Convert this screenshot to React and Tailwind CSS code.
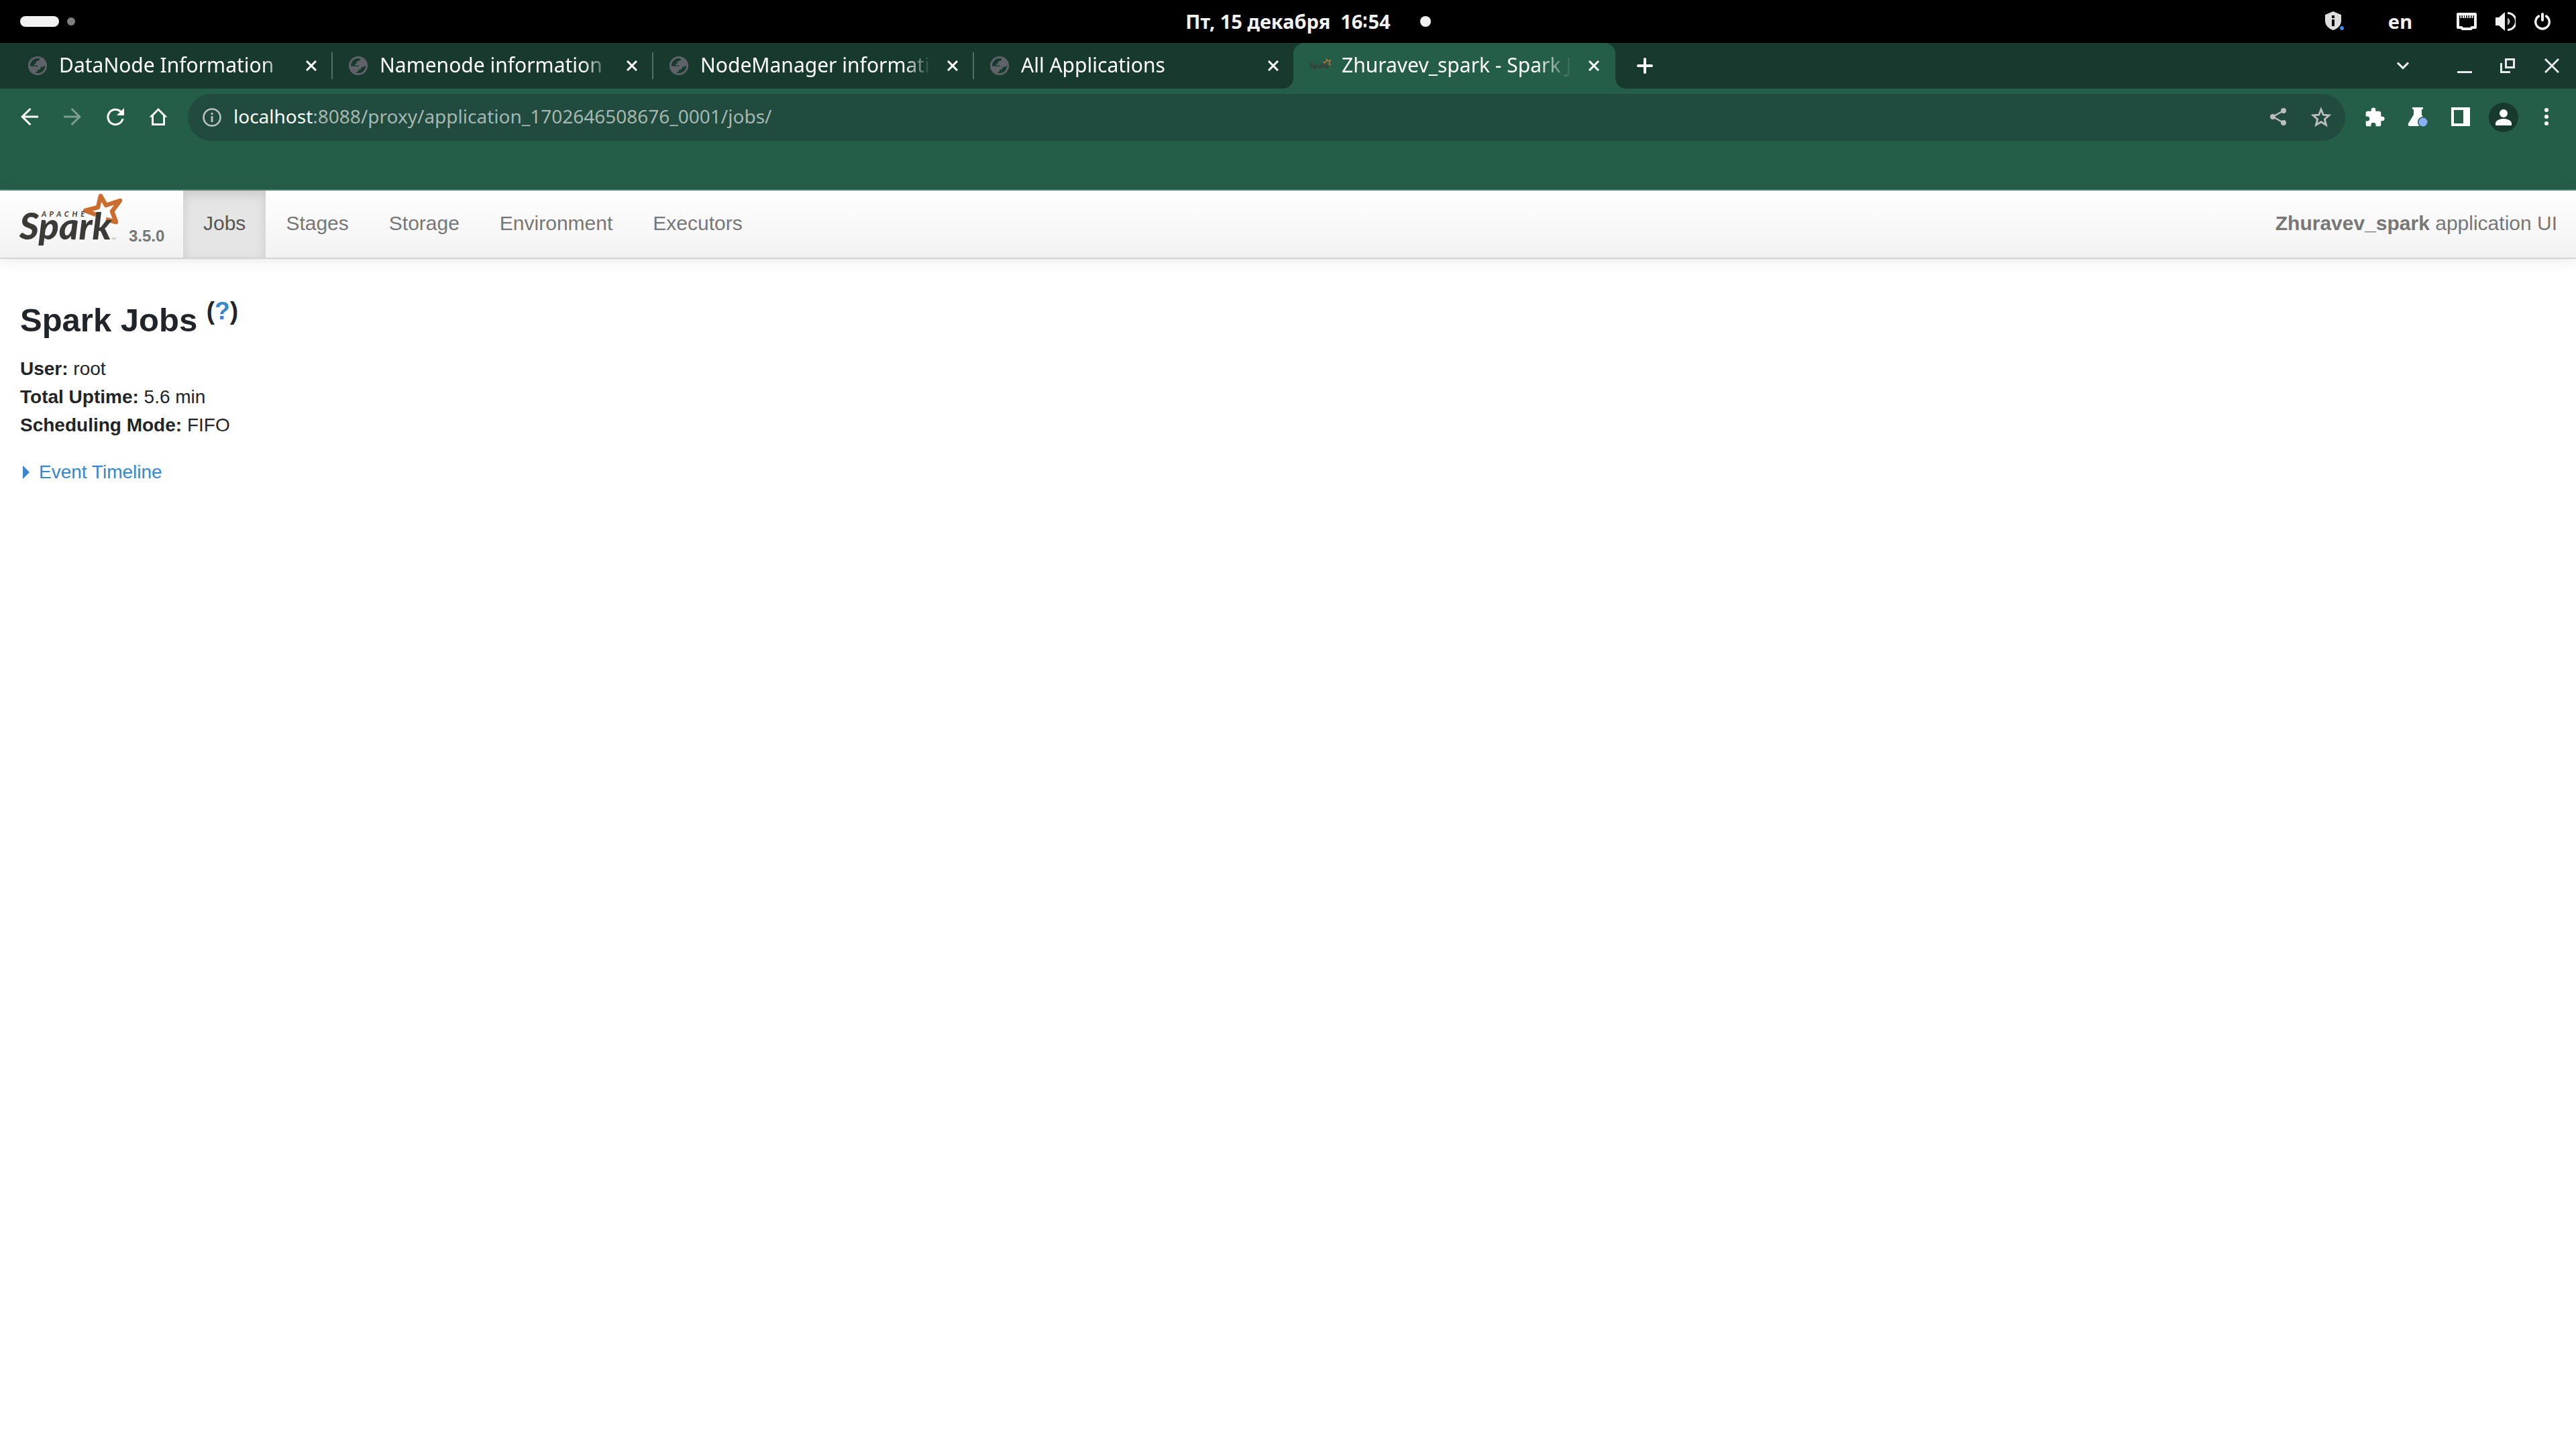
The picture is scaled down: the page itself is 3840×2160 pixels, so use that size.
import React from "react";

const TABS = [
  { title: "DataNode Information" },
  { title: "Namenode information" },
  { title: "NodeManager information" },
  { title: "All Applications" },
];

const NAV = ["Stages", "Storage", "Environment", "Executors"];

function Globe() {
  return (
    <svg viewBox="0 0 28 28" className="h-7 w-7 shrink-0" aria-hidden="true">
      <circle cx="14" cy="14" r="14" fill="#5f6368" />
      <path d="M3 14.500A11 11 0 0 1 17.500 3.500C17 6.500 14.500 7 12 7.500c0 2.500-.5 3.500-3 4v2h4c1.500 0 2 .8 2 1.500z" fill="#17392e" />
      <path d="M25 13c-1 2.500-3.500 3-6 2.500 0 3-1.500 4.500-5 4.500v2.300l-3.500 2.200A11 11 0 0 0 25 13z" fill="#17392e" />
    </svg>
  );
}

function SparkLogo({ className, viewBox = "0 0 160 88" }) {
  return (
    <svg viewBox={viewBox} className={className} role="img" aria-label="Apache Spark">
      <path
        d="M119 36L103 30L122 25L126 8L134 22L155 15L143 31L149 47L134 43"
        fill="none" stroke="#cb6d2f" strokeWidth="6.500" strokeLinejoin="round"
      />
      <text x="38" y="39" fontSize="11" fill="#3c3a37" fontWeight="700" fontStyle="italic" fontFamily="Lato, sans-serif">{"A\u00a0\u00a0P\u00a0\u00a0A\u00a0\u00a0C\u00a0\u00a0H\u00a0\u00a0E"}</text>
      <text x="5" y="73" fontSize="56" fill="#3c3a37" fontWeight="900" fontStyle="italic" fontFamily="Lato, sans-serif">Spark</text>
      <text x="142" y="77" fontSize="9" fill="#9a9a9a" fontFamily="Lato, sans-serif">™</text>
    </svg>
  );
}

function CloseButton({ label }) {
  return (
    <button aria-label={label} className="flex h-8 w-8 shrink-0 items-center justify-center">
      <svg viewBox="0 0 16 16" className="h-4 w-4" stroke="#fff" strokeWidth="3"><path d="M1 1l14 14M15 1L1 15" /></svg>
    </button>
  );
}

function Tool({ label, className = "", children }) {
  return (
    <button aria-label={label} className={"flex h-16 w-16 shrink-0 items-center justify-center " + className}>
      <svg viewBox="0 0 32 32" className="h-8 w-8" fill="currentColor">{children}</svg>
    </button>
  );
}

function SystemBar() {
  return (
    <header className="grid h-16 grid-cols-3 items-center bg-black text-[29px] leading-8 font-bold text-[#f2f2f2]">
      <div className="flex items-center gap-3 pl-[30px]">
        <span className="h-4 w-[58px] rounded-full bg-[#f2f2f2]" />
        <span className="h-3 w-3 rounded-full bg-[#7f7f7f]" />
      </div>
      <div className="relative justify-self-center whitespace-pre">
        Пт, 15 декабря  16∶54
        <span className="absolute top-2 left-full ml-11 h-4 w-4 rounded-full bg-[#f2f2f2]" />
      </div>
      <div className="flex items-center justify-end pr-[38px]">
        <svg viewBox="0 0 30 30" className="h-[30px] w-[30px]" aria-label="VPN shield">
          <path d="M12 0l12 5v9c0 6.500-5 11.500-12 14C5 25.500 0 20.500 0 14V5z" fill="#dedede" />
          <path d="M10 6h4v4h-4zM10 12h4v10h-4z" fill="#000" />
          <circle cx="25" cy="25" r="3" fill="#3b82f6" />
        </svg>
        <span className="ml-[64px]">en</span>
        <svg viewBox="0 0 30 28" className="ml-[66px] h-7 w-[30px]" aria-label="Network">
          <path fillRule="evenodd" fill="#f2f2f2" d="M2 1h26a2 2 0 0 1 2 2v20a2 2 0 0 1-2 2h-4l-2 2H8l-2-2H2a2 2 0 0 1-2-2V3a2 2 0 0 1 2-2zm2 4v16h4l2 2h10l2-2h4V5h-1.500v4h-2V5h-1.500v4h-2V5h-1.500v4h-2V5h-1.500v4h-2V5H11v4H9V5H7.500v4h-2V5z" />
        </svg>
        <svg viewBox="0 0 30 28" className="ml-7 h-7 w-[30px]" aria-label="Volume">
          <path d="M0 8h5l9-8v28l-9-8H0z" fill="#f2f2f2" />
          <path d="M18 8.500c2 1 3.500 3 3.500 5.500s-1.500 4.500-3.500 5.500z" fill="#bdbdbd" />
          <path d="M18 1.500a12.500 12.500 0 0 1 0 25" fill="none" stroke="#f2f2f2" strokeWidth="3" />
        </svg>
        <svg viewBox="0 0 24 28" className="ml-7 h-7 w-6" aria-label="Power" fill="none" stroke="#f2f2f2" strokeLinecap="round">
          <path d="M6.500 6a10.300 10.300 0 1 0 11 0" strokeWidth="3.400" />
          <path d="M12 3v9" strokeWidth="4" />
        </svg>
      </div>
    </header>
  );
}

function TabStrip() {
  return (
    <div className="flex h-[68px] items-stretch bg-[#17392e] pl-4 text-[30px] leading-9 text-white">
      {TABS.map((t, i) => (
        <div key={t.title} className="flex w-[478px] items-center">
          <span className={i ? "h-10 w-[2px] bg-[#4f7265]" : "h-10 w-[2px]"} />
          <div className="ml-6 flex min-w-0 flex-1 items-center pr-[14px]">
            <Globe />
            <span className="mr-4 ml-[18px] min-w-0 flex-1 overflow-hidden pb-[2px] whitespace-nowrap [mask-image:linear-gradient(to_right,#000_88%,transparent)]">{t.title}</span>
            <CloseButton label={"Close " + t.title} />
          </div>
        </div>
      ))}
      <div className="relative flex w-[480px] items-center rounded-t-2xl bg-[#255e48] pr-4 pl-6">
        <span className="absolute bottom-0 -left-4 h-4 w-4 bg-[radial-gradient(circle_at_top_left,transparent_16px,#255e48_16px)]" />
        <span className="absolute -right-4 bottom-0 h-4 w-4 bg-[radial-gradient(circle_at_top_right,transparent_16px,#255e48_16px)]" />
        <SparkLogo className="h-8 w-8 shrink-0" viewBox="5 10 150 88" />
        <span className="mr-4 ml-4 min-w-0 flex-1 overflow-hidden pb-[2px] whitespace-nowrap [mask-image:linear-gradient(to_right,#000_84%,transparent)]">Zhuravev_spark - Spark Jobs</span>
        <CloseButton label="Close Zhuravev_spark" />
      </div>
      <button aria-label="New tab" className="ml-7 flex w-8 items-center justify-center">
        <svg viewBox="0 0 24 24" className="h-6 w-6" stroke="#fff" strokeWidth="4" strokeLinecap="round"><path d="M12 2v20M2 12h20" /></svg>
      </button>
      <div className="ml-auto flex items-center pr-1 text-[#e8eaed]">
        <button aria-label="Search tabs" className="mr-7 flex h-16 w-16 items-center justify-center">
          <svg viewBox="0 0 18 12" className="h-3 w-[18px]" fill="none" stroke="#fff" strokeWidth="3"><path d="M1 1.500l8 8 8-8" /></svg>
        </button>
        <button aria-label="Minimize" className="flex h-16 w-16 items-center justify-center">
          <svg viewBox="0 0 22 22" className="h-[22px] w-[22px]" fill="currentColor"><path d="M0 19h22v3H0z" /></svg>
        </button>
        <button aria-label="Restore" className="mr-[2px] flex h-16 w-16 items-center justify-center">
          <svg viewBox="0 0 22 22" className="h-[22px] w-[22px]" fill="none" stroke="currentColor" strokeWidth="3"><path d="M8.500 1.500h12v12h-12zM1.500 7v13.500H15" /></svg>
        </button>
        <button aria-label="Close window" className="flex h-16 w-16 items-center justify-center">
          <svg viewBox="0 0 22 22" className="h-[22px] w-[22px]" fill="none" stroke="currentColor" strokeWidth="3"><path d="M1 1l20 20M21 1L1 21" /></svg>
        </button>
      </div>
    </div>
  );
}

function Toolbar() {
  return (
    <div className="h-[152px] border-b-2 border-[#4d826d] bg-[#255e48] pt-2 text-white">
      <div className="flex h-[70px] items-center px-3">
        <Tool label="Back"><path d="M29 13.500H8.800L18.500 4 16.300 2 3 15l13.300 13 2.200-2L8.800 16.500H29z" /></Tool>
        <Tool label="Forward" className="opacity-40"><path d="M3 13.500h20.200L13.500 4l2.200-2L29 15l-13.300 13-2.200-2 9.700-9.500H3z" /></Tool>
        <Tool label="Reload">
          <path d="M27 18a11.200 11.200 0 1 1-3-10.500" fill="none" stroke="currentColor" strokeWidth="3" />
          <path d="M29 2v11H18z" />
        </Tool>
        <Tool label="Home"><path fillRule="evenodd" d="M16 2L2.500 15.500H6V28h20V15.500h3.500zM16 6l7 7.200V25H9V13.200z" /></Tool>
        <div className="ml-3 flex h-full min-w-0 flex-1 items-center rounded-full bg-[#204b3e] pr-1 pl-[22px] text-[28px]">
          <svg viewBox="0 0 28 28" className="h-7 w-7 shrink-0" aria-label="Site information">
            <circle cx="14" cy="14" r="12.500" fill="none" stroke="#bdc1c6" strokeWidth="2.600" />
            <path d="M12.600 7h2.800v3h-2.800zM12.600 12h2.800v9h-2.800z" fill="#bdc1c6" />
          </svg>
          <a href="#url" className="ml-[18px] flex-1 pb-1 whitespace-nowrap text-[#a6b7b1]"><span className="text-white">localhost</span>:8088/proxy/application_1702646508676_0001/jobs/</a>
          <Tool label="Share" className="text-[#bdbdbd]">
            <circle cx="8" cy="15" r="4" /><circle cx="24" cy="6" r="4" /><circle cx="24" cy="24" r="4" />
            <path d="M24 6L8 15l16 9" fill="none" stroke="currentColor" strokeWidth="2.400" />
          </Tool>
          <Tool label="Bookmark" className="text-[#bdbdbd]">
            <path d="M16 4l3.300 8.200 8.700.7-6.700 5.800 2.200 8.600L16 22.700l-7.500 4.600 2.200-8.600L4 12.900l8.700-.7z" fill="none" stroke="currentColor" strokeWidth="2.800" />
          </Tool>
        </div>
        <Tool label="Extensions" className="ml-3">
          <path d="M27.300 14.700h-2V9.300a2.700 2.700 0 0 0-2.600-2.600h-5.400v-2a3.300 3.300 0 0 0-6.600 0v2H5.300a2.600 2.600 0 0 0-2.600 2.600v5.100h2a3.600 3.600 0 0 1 0 7.200h-2v5.100a2.600 2.600 0 0 0 2.600 2.600h5.100v-2a3.600 3.600 0 0 1 7.200 0v2h5.100a2.600 2.600 0 0 0 2.600-2.600v-5.400h2a3.300 3.300 0 0 0 0-6.600z" />
        </Tool>
        <Tool label="Labs">
          <path d="M8 1h16v3h-2v8l7 13c1 2 0 4-2 4H4c-2 0-3-2-2-4l8-13V4H8z" />
          <circle cx="24" cy="23" r="8" fill="#255e48" /><circle cx="24" cy="23" r="6.500" fill="#8ab0f8" />
        </Tool>
        <Tool label="Side panel"><path fillRule="evenodd" d="M2 1h28v28H2zM6 5v20h14V5z" /></Tool>
        <button aria-label="Profile" className="flex h-16 w-16 shrink-0 items-center justify-center">
          <svg viewBox="0 0 44 44" className="h-11 w-11"><circle cx="22" cy="22" r="22" fill="#17392e" /><circle cx="22" cy="16" r="6" fill="#fff" /><path d="M10 34v-3c0-4.500 7-7 12-7s12 2.500 12 7v3z" fill="#fff" /></svg>
        </button>
        <Tool label="Menu"><circle cx="16" cy="5" r="3" /><circle cx="16" cy="15" r="3" /><circle cx="16" cy="25" r="3" /></Tool>
      </div>
    </div>
  );
}

function Navbar() {
  return (
    <nav className="flex h-[102px] items-stretch border-b-2 border-[#d4d4d4] bg-gradient-to-b from-white to-[#f2f2f2] text-[30px] leading-10 text-[#777] shadow-[0_2px_20px_rgba(0,0,0,0.1)]">
      <a href="#home" className="flex w-[273px] items-start pl-6">
        <SparkLogo className="h-[88px] w-[160px]" />
        <span className="mt-12 ml-2 text-2xl leading-10 font-bold">3.5.0</span>
      </a>
      <a href="#jobs" className="flex items-center bg-[#e5e5e5] px-[30px] pb-[2px] text-[#555] shadow-[inset_0_6px_16px_rgba(0,0,0,0.125)]">Jobs</a>
      {NAV.map((n) => (
        <a key={n} href={"#" + n} className="flex items-center px-[30px] pb-[2px]">{n}</a>
      ))}
      <p className="ml-auto self-center pr-7 pb-[2px]"><strong>Zhuravev_spark</strong> application UI</p>
    </nav>
  );
}

export default function App() {
  return (
    <div className="min-h-screen bg-white font-['Noto_Sans',sans-serif]">
      <SystemBar />
      <TabStrip />
      <Toolbar />
      <div className="font-['Liberation_Sans',sans-serif] text-[28px] leading-[42px] text-[#212529]">
        <Navbar />
        <main className="px-[30px] pt-[61px]">
          <h1 className="text-[49px] leading-[60px] font-bold">
            Spark Jobs <sup className="text-[37px] leading-none">(<a href="#help" className="text-[#3787cd]">?</a>)</sup>
          </h1>
          <ul className="mt-[22px]">
            <li><strong>User:</strong> root</li>
            <li><strong>Total Uptime:</strong> 5.6 min</li>
            <li><strong>Scheduling Mode:</strong> FIFO</li>
          </ul>
          <button className="mt-7 flex items-center text-[#3787cd]">
            <svg viewBox="0 0 10 20" className="ml-1 h-5 w-[10px]" fill="currentColor" aria-hidden="true"><path d="M0 0l10 10L0 20z" /></svg>
            <span className="ml-[14px]">Event Timeline</span>
          </button>
        </main>
      </div>
    </div>
  );
}
